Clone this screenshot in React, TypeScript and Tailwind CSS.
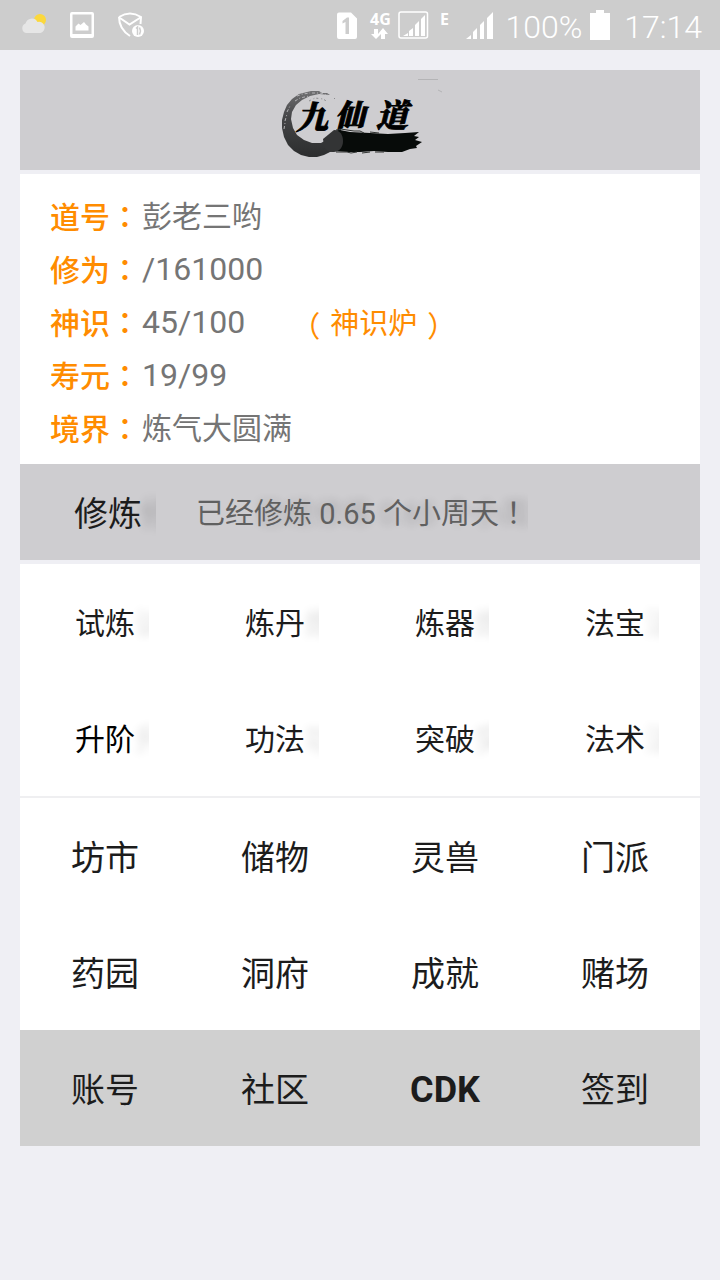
import React from 'react';

type Action = { label: string; bold?: boolean; black?: boolean };

const stats = [
  { label: '道号', value: '彭老三哟', numeric: false },
  { label: '修为', value: '/161000', numeric: true },
  { label: '神识', value: '45/100', numeric: true, extra: '神识炉' },
  { label: '寿元', value: '19/99', numeric: true },
  { label: '境界', value: '炼气大圆满', numeric: false },
];

const practice: Action[] = [
  { label: '试炼' },
  { label: '炼丹' },
  { label: '炼器' },
  { label: '法宝' },
  { label: '升阶', black: true },
  { label: '功法' },
  { label: '突破' },
  { label: '法术' },
];

const places: Action[] = [
  { label: '坊市' },
  { label: '储物' },
  { label: '灵兽' },
  { label: '门派' },
  { label: '药园' },
  { label: '洞府' },
  { label: '成就' },
  { label: '赌场' },
];

const footer: Action[] = [
  { label: '账号' },
  { label: '社区' },
  { label: 'CDK', bold: true },
  { label: '签到' },
];

// centred full-width punctuation
const wide = "font-['Noto_Sans_CJK_TC',sans-serif]";

const StatusBar = () => (
  <header className="flex h-[50px] items-center justify-between bg-[#cdcdcd] pl-5 pr-[18px] text-white">
    <div className="flex items-center gap-[22px]">
      <svg width="28" height="28" viewBox="0 0 28 28">
        <circle cx="20" cy="9" r="6" fill="#fbd83c" />
        <path d="M6 22a5 5 0 0 1-.5-9.500A6.500 6.500 0 0 1 17.500 11a5.700 5.700 0 0 1 3 11z" fill="#e6e6e6" />
      </svg>
      <svg width="24" height="26" viewBox="0 0 24 26">
        <path fillRule="evenodd" fill="#fff" d="M2 0h20a2 2 0 0 1 2 2v22a2 2 0 0 1-2 2H2a2 2 0 0 1-2-2V2a2 2 0 0 1 2-2zM2.500 2.500v19.500h19V2.500z" />
        <path fill="#fff" d="M5.500 18.500v-4l3-3 2 1.500 3.500-3 2 2.500 2.500 2v4z" />
      </svg>
      <svg width="30" height="28" viewBox="0 0 30 28" fill="none" stroke="#fff" strokeWidth="2">
        <path d="M3 6Q14-1 25 6L24.500 13M3 6Q3 18 14 25M4 7l9.500 6.500L24.500 6.500" />
        <circle cx="22" cy="20" r="6" fill="#fff" stroke="none" />
        <path d="M20 17.500l1.500-1.500v8M23.500 16.500l1 3.500-1 3.500" stroke="#cdcdcd" strokeWidth="1.500" />
      </svg>
    </div>
    <div className="flex items-center">
      <svg width="160" height="46" viewBox="0 -8 160 46" fill="#fff">
        <path d="M2 2.500h12l6 6V27a2 2 0 0 1-2 2H2a2 2 0 0 1-2-2V4.500a2 2 0 0 1 2-2z" />
        <path d="M5.500 11l4.500-3.500h2V24H8.500V12l-3 1.500z" fill="#cdcdcd" />
        <text x="33" y="15" className="font-['Open_Sans',sans-serif] text-[16px] font-bold">4G</text>
        <path d="M41 19v5h3l-5 5-5-5h3v-5zM48 29v-5h3l-5-6-5 6h3v5z" />
        <rect x="62" y="2" width="28.500" height="26" rx="2" fill="none" stroke="#fff" strokeWidth="1.500" />
        <path d="M66 26l5-3v3zM72 26v-5l4-3v8zM78 26V15l4-4v15zM84 26V9l4-4v21z" />
        <text x="103" y="15" className="font-['Open_Sans',sans-serif] text-[16px] font-bold">E</text>
        <path d="M129 29l5-4v4zM136 29v-7l4-4v11zM143 29V15l4-4v18zM150 29V8l6-6v27z" />
      </svg>
      <span className="ml-2 pt-1 text-[32px] leading-[46px] font-light">100%</span>
      <svg className="ml-2" width="20" height="30" viewBox="0 0 20 30" fill="#fff">
        <path d="M6 0h8v3h6v27H0V3h6z" />
      </svg>
      <span className="ml-[14px] pt-1 text-[32px] leading-[46px] font-light">17:14</span>
    </div>
  </header>
);

const Logo = () => (
  <svg width="180" height="90" viewBox="270 76 180 90" role="img" aria-label="九仙道">
    <defs>
      <linearGradient id="ink" x1="0" y1="0" x2="0" y2="1">
        <stop offset="0" stopColor="#707072" />
        <stop offset="0.400" stopColor="#454547" />
        <stop offset="0.700" stopColor="#38393a" />
        <stop offset="1" stopColor="#2c2d2e" />
      </linearGradient>
    </defs>
    <path
      d="M330 96l-3-2-5 0-3-2-8 0-4 1-8 2-7 5-5 6-3 7-2 8 0 8 2 9 4 8 6 6 7 4 8 2 8 0 7-2 6-3 5-1 6-3 0-19-5 2-8 8-7 4-9 0-8-3-7-5-4-7-2-9 1-7 4-7 6-5 8-4 9-2z"
      fill="url(#ink)"
    />
    <path d="M297 97l6-2 7-1M312 94l8 0 8 2M295 102l5-3 9-2M287 113l3-6M285 122l2-7M284 130l1-6" fill="none" stroke="#b4b3b6" strokeWidth="1" strokeDasharray="3 2 1 2" />
    <path d="M309 102l6-3 8 1 5 3M334 99l1 1" fill="none" stroke="#8b8b8d" strokeWidth="1" strokeDasharray="2 3 1 2" />
    <path d="M334 132l6-1 10 2 20 1 18 1 17-1 14-1-5 4 5 1-4 3 7 2-6 4 1 2-7 1-8 3-14 0-14-1-14 1-12 0-14-1z" fill="#070b09" />
    <path d="M334 131c6 0 9 5 9 11s-3 10-9 11c-5 0-9-2-10-6l-1-7z" fill="#333435" />
    <path d="M336 131l5-1 6 1 7 1 6 0 4 2M370 133l9 1M336 153l11 0 4 1 6-1M362 154l8-1M375 153l9 0" fill="none" stroke="#303331" strokeWidth="1" />
    <path d="M418 80.500h20M438 91l4 2" stroke="#b4b4b6" strokeWidth="1" />
    <g stroke="#000" strokeWidth="0.800" className="font-['Noto_Serif_CJK_SC','Noto_Sans_CJK_SC',sans-serif] font-black italic">
      <text x="296" y="130" className="text-[32px]">九</text>
      <text x="335" y="127" className="text-[30px]">仙</text>
      <text x="376" y="128" className="text-[32px]">道</text>
    </g>
  </svg>
);

const ActionGrid = ({ items, small }: { items: Action[]; small?: boolean }) => (
  <div className="grid grid-cols-4">
    {items.map((item) => (
      <button key={item.label} type="button" className="flex h-[116px] items-center justify-center pt-1">
        <span
          className={
            small
              ? `overflow-hidden px-[14px] text-[30px] leading-[52px] text-shadow-[60px_0_8px_rgb(0_0_0/0.14)] ${item.black ? 'text-black' : 'text-[#1c1c1c]'}`
              : `leading-[52px] ${item.bold ? 'text-[36px] font-bold' : 'text-[34px]'}`
          }
        >
          {item.label}
        </span>
      </button>
    ))}
  </div>
);

export default function App() {
  return (
    <div className="min-h-screen bg-[#efeff4] font-[Roboto,'Noto_Sans_CJK_SC',sans-serif] text-[#1c1c1c]">
      <StatusBar />
      <main className="p-5">
        <h1 className="flex h-[100px] items-center justify-center bg-[#cecdd0]">
          <Logo />
        </h1>

        <section className="mt-1 bg-white px-[30px] pt-4 pb-[9px]">
          {stats.map((stat) => (
            <div key={stat.label} className="flex h-[53px] items-center">
              <span className="text-[30px] leading-[53px] font-medium text-[#ff8c00]">
                {stat.label}
                <span className={wide}>：</span>
              </span>
              <span className={`ml-[2px] leading-[53px] text-[#757575] ${stat.numeric ? 'text-[32px]' : 'text-[30px]'}`}>
                {stat.value}
              </span>
              {stat.extra && (
                <button type="button" className="ml-[46px] flex gap-[10px] pt-1 text-[29px] leading-[49px] text-[#ff8c00]">
                  <span className={wide}>（</span>
                  {stat.extra}
                  <span className={wide}>）</span>
                </button>
              )}
            </div>
          ))}
        </section>

        <section className="flex h-24 items-center bg-[#cecdd0]">
          <button
            type="button"
            className="ml-10 overflow-hidden px-[14px] pt-1 text-[34px] leading-[52px] text-shadow-[66px_0_8px_rgb(0_0_0/0.18)]"
          >
            修炼
          </button>
          <p className="ml-10 overflow-hidden text-[29px] leading-[52px] text-[#606060] text-shadow-[60px_0_8px_rgb(0_0_0/0.16)]">
            已经修炼 0.65 个小周天<span className={wide}>！</span>
          </p>
        </section>

        <section className="mt-1 bg-white">
          <ActionGrid items={practice} small />
        </section>
        <section className="border-t-2 border-[#efeff1] bg-white">
          <ActionGrid items={places} />
        </section>
        <section className="bg-[#d0d0d0]">
          <ActionGrid items={footer} />
        </section>
      </main>
    </div>
  );
}
